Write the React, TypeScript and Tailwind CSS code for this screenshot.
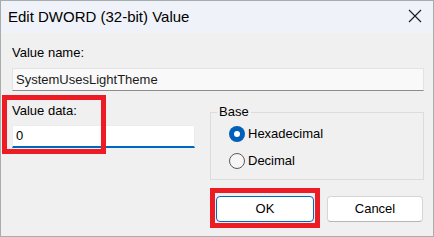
import React from 'react';

const font = "font-['Liberation_Sans',Arial,sans-serif]";

const Radio = ({ checked, label }: { checked?: boolean; label: string }) => (
  <div className="flex h-[20px] items-center gap-[3px]">
    {checked ? (
      <span className="flex h-[16px] w-[16px] items-center justify-center rounded-full bg-[#005fb8]">
        <span className="h-[6px] w-[6px] rounded-full bg-white" />
      </span>
    ) : (
      <span className="h-[16px] w-[16px] rounded-full border border-[#5a5a5a] bg-[#f6f6f6]" />
    )}
    <span className="text-[13px] leading-[16px] text-black">{label}</span>
  </div>
);

export default function App() {
  return (
    <div className={`relative h-[237px] w-[434px] overflow-hidden border border-[#a5adad] bg-[#f0f0f0] ${font}`}>
      {/* Title bar */}
      <div className="flex h-[32px] items-center justify-between bg-[#eff3f9] pl-[7px] pr-[11px]">
        <span className="text-[15px] leading-[20px] text-black">Edit DWORD (32-bit) Value</span>
        <svg width="14" height="14" viewBox="0 0 14 14" className="mt-[-3px]">
          <path d="M1 1 L13 13 M13 1 L1 13" stroke="#1a1a1a" strokeWidth="1.1" />
        </svg>
      </div>

      <div className="px-[11px] pr-[9px] pt-[12px]">
        <div className="text-[13px] leading-[16px] text-black">Value name:</div>
        <div className="mt-[7px] flex h-[23px] items-center border border-[#e3e3e3] border-b-[#8d8d8d] bg-[#f9f9f9] px-[3px] text-[13px] text-[#1b1b1b]">
          SystemUsesLightTheme
        </div>

        <div className="flex gap-[15px]">
          <div className="w-[183px]">
            <div className="mt-[12px] text-[13px] leading-[16px] text-black">Value data:</div>
            <div className="mt-[6px] flex h-[23px] items-center border border-[#ececec] border-b-2 border-b-[#0067c0] bg-white px-[3px] text-[13px] text-black">
              0
            </div>
          </div>
          <fieldset className="mt-[13px] w-[214px] border border-[#dcdcdc] p-0 pb-[8px]">
            <legend className="ml-[6px] px-[2px] text-[13px] leading-[16px] text-black">Base</legend>
            <div className="flex flex-col gap-[7px] pl-[18px] pt-[4px]">
              <Radio checked label="Hexadecimal" />
              <Radio label="Decimal" />
            </div>
          </fieldset>
        </div>

        <div className="mt-[16px] flex justify-end gap-[13px] pr-[1px]">
          <button className="h-[26px] w-[98px] rounded-[4px] border border-[#0067c0] bg-white text-[13px] text-black">
            OK
          </button>
          <button className="h-[26px] w-[96px] rounded-[4px] border border-[#d5d5d5] border-b-[#b5b5b5] bg-white text-[13px] text-black">
            Cancel
          </button>
        </div>
      </div>

      {/* Red annotation boxes */}
      <div className="pointer-events-none absolute left-[1px] top-[94px] h-[59px] w-[104px] border-[5px] border-[#ed1c24]" />
      <div className="pointer-events-none absolute left-[209px] top-[187px] h-[40px] w-[110px] border-[5px] border-[#ed1c24]" />
    </div>
  );
}
